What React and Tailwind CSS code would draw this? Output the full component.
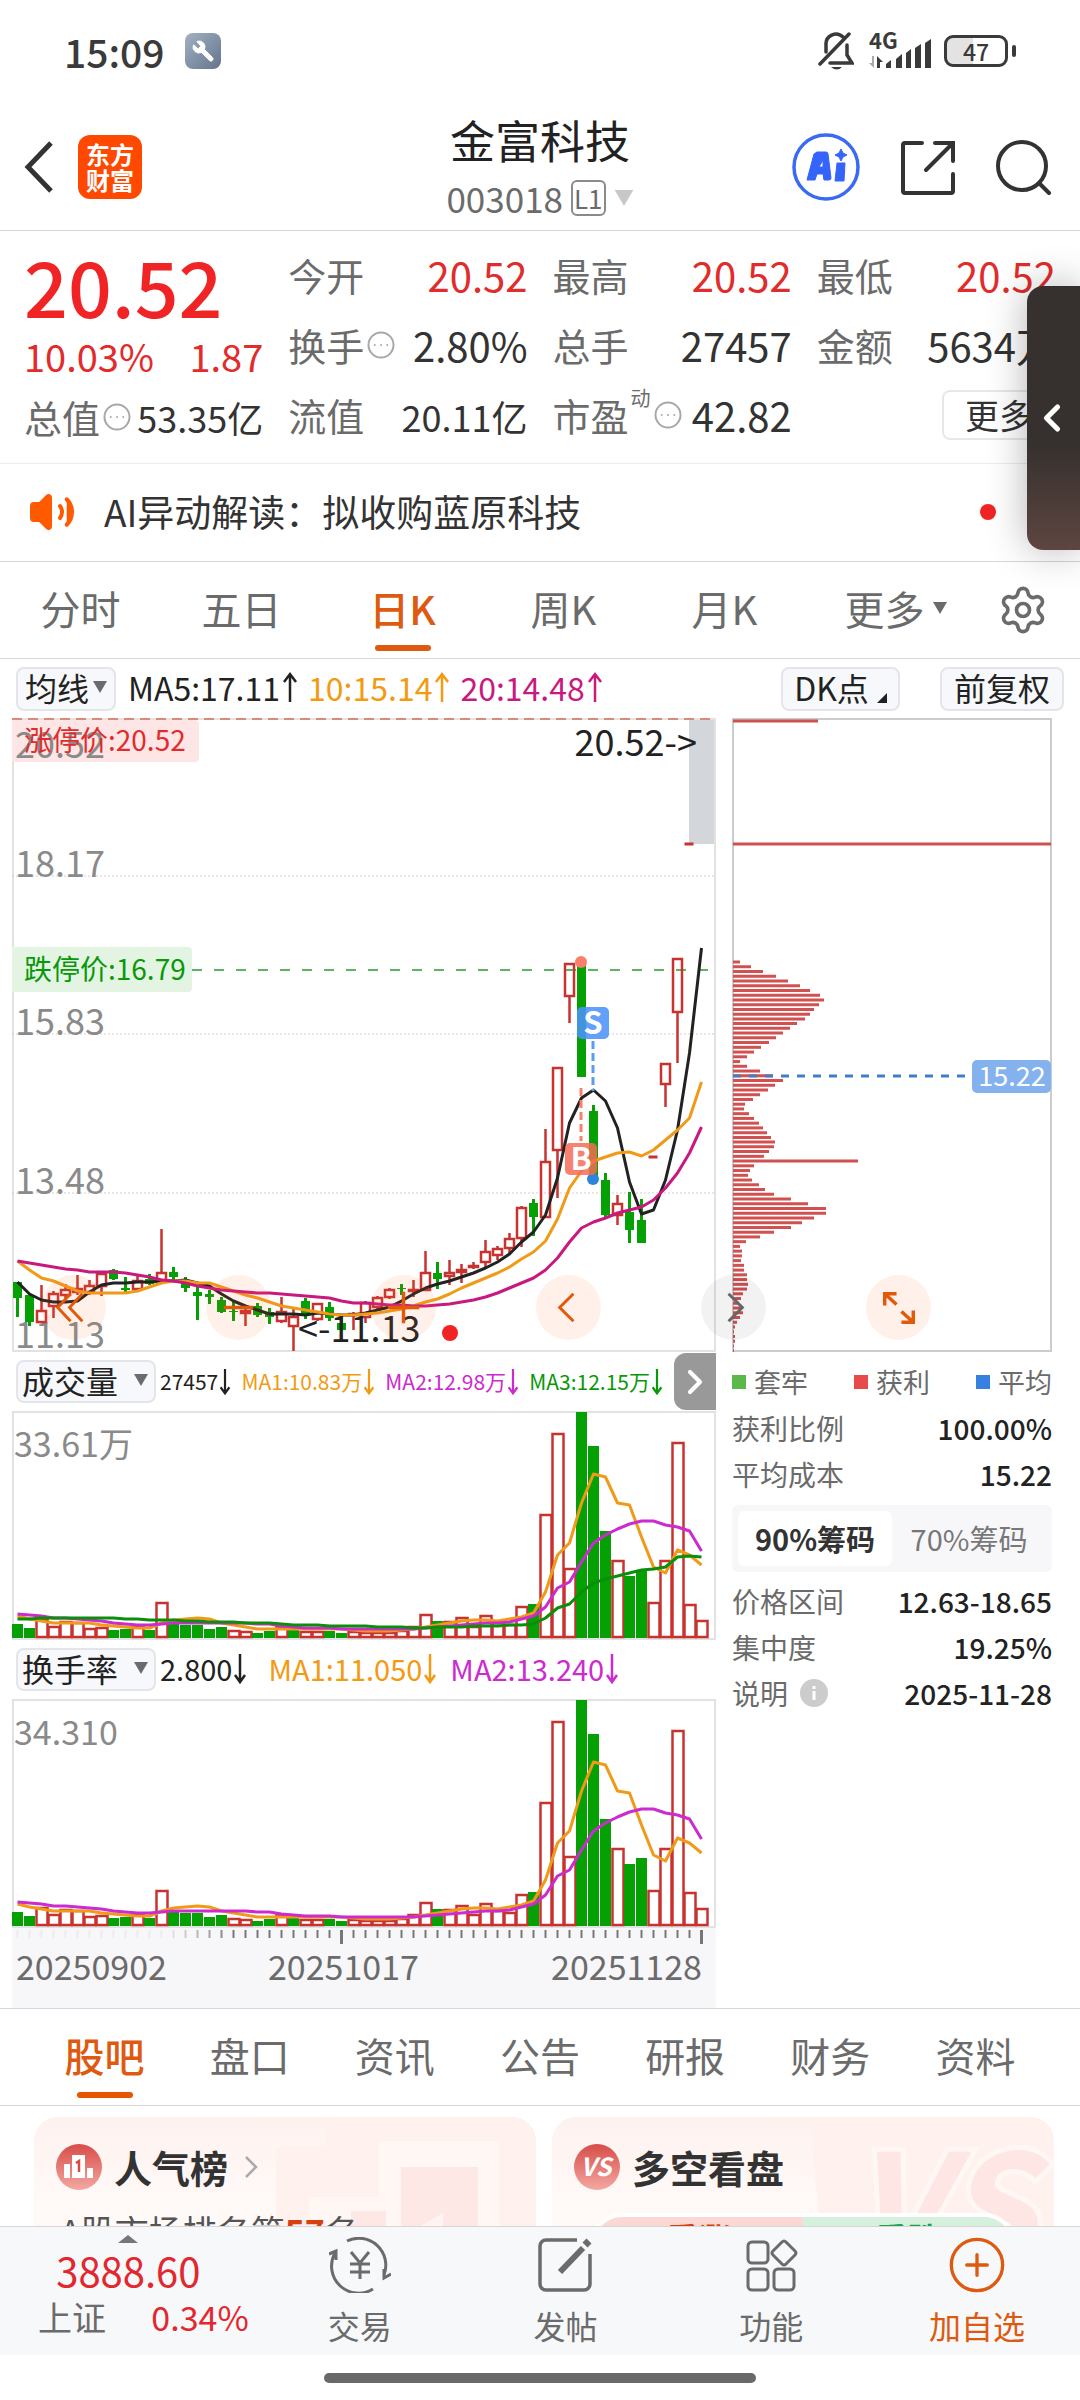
import {
  ChevronLeft,
  ChevronRight,
  CircleEllipsis,
  CirclePlus,
  Settings,
  Volume2,
  Wrench
} from 'lucide-react';

const STEP = 12;
const RED = '#c8322f';
const GREEN = '#04a004';

// [direction, body top, body bottom, wick top, wick bottom]
const CANDLES = [
  ['g', 564, 580, 564, 599], ['g', 577, 604, 577, 608], ['r', 592, 605, 567, 605], ['r', 575, 589, 573, 600],
  ['r', 571, 578, 566, 582], ['r', 570, 575, 557, 577], ['r', 567, 575, 562, 577], ['r', 555, 569, 555, 578],
  ['g', 552, 561, 551, 562], ['g', 570, 572, 559, 574], ['r', 562, 572, 557, 573], ['g', 561, 566, 556, 567],
  ['r', 554, 563, 511, 563], ['g', 554, 559, 549, 564], ['g', 564, 570, 559, 574], ['g', 574, 578, 569, 602],
  ['g', 576, 579, 572, 586], ['g', 582, 594, 579, 595], ['g', 593, 594, 584, 603], ['r', 592, 596, 589, 608],
  ['g', 588, 597, 585, 599], ['g', 594, 599, 590, 606], ['r', 593, 604, 579, 605], ['r', 598, 609, 590, 633],
  ['g', 583, 596, 580, 601], ['r', 585, 602, 585, 603], ['g', 589, 600, 584, 603], ['g', 605, 612, 597, 613],
  ['r', 595, 597, 594, 612], ['r', 584, 600, 583, 605], ['r', 579, 590, 578, 591], ['r', 571, 580, 570, 581],
  ['g', 570, 571, 566, 577], ['r', 571, 573, 562, 579], ['r', 554, 573, 533, 573], ['g', 555, 561, 544, 571],
  ['r', 554, 559, 542, 567], ['r', 551, 555, 546, 565], ['r', 547, 549, 544, 551], ['r', 533, 545, 522, 549],
  ['r', 530, 538, 528, 542], ['r', 520, 531, 515, 537], ['r', 489, 521, 488, 529], ['g', 485, 499, 481, 518],
  ['r', 443, 500, 411, 500], ['r', 349, 433, 349, 480], ['r', 245, 279, 245, 305], ['g', 242, 359, 242, 359],
  ['g', 393, 460, 387, 460], ['g', 462, 497, 455, 499], ['r', 485, 498, 477, 507], ['g', 494, 512, 474, 525],
  ['g', 502, 525, 481, 525], ['r', 439, 439, 439, 439], ['r', 345, 367, 345, 389], ['r', 240, 295, 240, 345],
  ['r', 126, 126, 126, 126]
];

const PRICE_MA5 = [
  564, 576, 582, 584, 584, 583, 574, 567, 565, 565, 564, 564, 563, 563, 562, 565, 568, 576, 583, 588,
  592, 596, 596, 596, 597, 595, 596, 597, 597, 595, 592, 589, 583, 576, 570, 566, 563, 559, 555, 550,
  544, 536, 524, 514, 497, 460, 405, 380, 372, 383, 410, 464, 496, 492, 462, 412, 335, 230
];
const PRICE_MA10 = [
  543, 552, 560, 563, 568, 573, 575, 575, 575, 575, 573, 569, 565, 563, 563, 565, 565, 569, 573, 577,
  580, 584, 588, 590, 592, 594, 596, 597, 597, 596, 595, 593, 591, 588, 584, 581, 576, 570, 565, 560,
  555, 549, 541, 534, 523, 501, 470, 453, 443, 439, 435, 434, 438, 432, 422, 412, 400, 364
];
const PRICE_MA20 = [
  543, 545, 547, 549, 551, 552, 554, 554, 554, 555, 557, 559, 562, 563, 565, 568, 570, 572, 573, 574,
  575, 575, 576, 577, 578, 579, 580, 583, 585, 585, 586, 587, 587, 588, 588, 587, 586, 584, 582, 579,
  575, 570, 565, 560, 552, 540, 524, 510, 504, 500, 495, 492, 489, 482, 470, 455, 435, 409
];

const VOLUME_DIR = 'ggrrrrrrggrgrggggg' + 'rrggrgrrggrrrrrrrgrrrrrrrg' + 'rrrgggrggrrrrr';
const VOLUMES = [
  14, 10, 19, 12, 17, 16, 10, 11, 8, 9, 12, 8, 36, 14, 13, 13, 9, 11, 8, 7,
  5, 7, 12, 8, 7, 7, 7, 5, 7, 6, 6, 6, 8, 12, 24, 17, 17, 21, 12, 23,
  16, 14, 32, 34, 124, 205, 70, 226, 192, 107, 78, 62, 68, 36, 78, 196, 34, 18
];
const VOLUME_MA1 = [
  205, 208, 210, 212, 212, 212, 212, 214, 215, 216, 217, 217, 212, 209, 208, 207, 208, 212, 214, 216,
  218, 218, 218, 218, 218, 218, 218, 218, 219, 220, 220, 220, 219, 218, 216, 214, 212, 210, 209, 209,
  210, 208, 206, 202, 181, 144, 132, 92, 63, 66, 92, 94, 126, 156, 162, 139, 144, 154
];
const VOLUME_MA2 = [
  203, 204, 205, 207, 207, 208, 209, 210, 212, 213, 214, 214, 213, 212, 212, 212, 212, 212, 212, 212,
  213, 213, 215, 216, 217, 217, 217, 218, 218, 218, 218, 218, 218, 218, 217, 216, 215, 214, 213, 212,
  212, 211, 208, 205, 196, 177, 171, 151, 132, 124, 118, 113, 110, 110, 114, 116, 120, 140
];
const VOLUME_MA3 = [
  208, 208, 207, 207, 207, 207, 207, 207, 207, 208, 208, 209, 209, 209, 210, 210, 211, 211, 211, 212,
  212, 212, 213, 214, 214, 214, 215, 215, 215, 215, 216, 216, 216, 217, 217, 216, 216, 216, 215, 215,
  215, 214, 214, 213, 207, 197, 193, 181, 172, 168, 165, 162, 159, 158, 156, 146, 145, 146
];

const CHIPS = [
  7, 18, 30, 43, 55, 67, 77, 87, 91, 86, 81, 77, 72, 64, 57, 50, 43, 36, 28, 21, 14, 7, 14, 27, 40, 50, 42, 35,
  27, 20, 12, 11, 16, 21, 26, 30, 34, 38, 42, 41, 36, 31, 125, 21, 17, 15, 19, 26, 32, 41, 58, 75, 93, 93, 81,
  69, 58, 41, 27, 13, 7, 9, 9, 8, 11, 11, 14, 14, 15, 14, 10, 8, 6, 9, 10, 7, 4, 2, 1, 2, 2, 1, 1
];

const barX = (i) => 5.5 + i * STEP;
const toPoints = (values) => values.map((y, i) => `${barX(i)},${y}`).join(' ');

const Line = ({ values, color }) => (
  <polyline points={toPoints(values)} fill="none" stroke={color} strokeWidth="3" strokeLinejoin="round" />
);

const Triangle = ({ className }) => (
  <svg viewBox="0 0 14 12" className={className} fill="currentColor" aria-hidden="true">
    <path d="M0 0h14L7 12z" />
  </svg>
);

const Arrow = ({ down = false, className = 'h-8 w-4' }) => (
  <svg viewBox="0 0 16 32" className={className} fill="none" stroke="currentColor" strokeWidth="2.5" aria-hidden="true">
    {down ? <path d="M8 1v28M3 22l5 7 5-7" /> : <path d="M8 31V3M2 11l6-8 6 8" />}
  </svg>
);

const StatusBar = () => (
  <div className="flex h-[104px] items-center justify-between pr-16 pb-0.5 pl-16 text-[#3a3a3a]">
    <div className="flex items-center gap-5">
      <span className="text-[39px] leading-none font-medium">15:09</span>
      <span className="flex size-9 items-center justify-center rounded-lg bg-gradient-to-br from-[#a3b1c3] to-[#64758c]">
        <Wrench className="size-6 -scale-x-100 text-white" fill="white" strokeWidth={1} />
      </span>
    </div>
    <div className="flex items-center">
      <svg viewBox="0 0 36 40" className="h-10 w-9" fill="none" stroke="currentColor" strokeWidth="3.5" strokeLinecap="round">
        <path d="M8 21v-7a10 10 0 0 1 17-8M2 33L31 3M12 32h22l-5-8V14" />
        <path d="M13 36h11q-5 5-11 0z" fill="currentColor" stroke="none" />
      </svg>
      <svg viewBox="0 0 64 40" className="ml-3.5 h-10 w-16" fill="currentColor">
        <text x="1" y="18" fontSize="22" fontWeight="700">4G</text>
        <path d="M6 25v12l-5-5h3v-7z" fill="#aaa" />
        <path d="M9 37V25l6 6h-3v6z" />
        <path d="M18 33l5-4v8h-5zM28 28l6-5v14h-6zM38 22l5-4v19h-5zM47 17l6-4v24h-6zM57 12l6-4v29h-6z" />
      </svg>
      <span className="ml-3 flex h-8 w-16 items-center justify-center rounded-[9px] border-3 border-current bg-gradient-to-r from-[#e3e3e3] from-45% to-white to-45% text-[23px] leading-none font-medium">
        47
      </span>
      <span className="ml-1 h-3 w-1 rounded-sm bg-current" />
    </div>
  </div>
);

const Header = () => (
  <header className="grid h-[127px] grid-cols-3 items-center border-b border-[#d6d6d6]">
    <div className="flex items-center gap-6 pl-6">
      <button type="button" aria-label="返回">
        <svg viewBox="0 0 30 52" className="h-[52px] w-[30px]" fill="none" stroke="#333" strokeWidth="5">
          <path d="M27 2L4 26l23 24" />
        </svg>
      </button>
      <span className="flex size-16 flex-col items-center justify-center rounded-xl bg-[#ff4800] text-2xl leading-[26px] font-bold text-white">
        <span>东方</span>
        <span>财富</span>
      </span>
    </div>
    <div className="flex flex-col items-center">
      <h1 className="text-[45px] leading-[58px] text-[#222]">金富科技</h1>
      <div className="flex items-center gap-2 pt-1 text-[35px] leading-[50px] text-[#6b6b6b]">
        003018
        <span className="rounded-md border-2 border-[#8a8a8a] px-px text-[26px] leading-8">L1</span>
        <Triangle className="h-4 w-5 text-[#c8c8c8]" />
      </div>
    </div>
    <div className="flex items-center justify-end gap-10 pr-7 text-[#333]">
      <button type="button" aria-label="Ai">
        <svg viewBox="0 0 68 68" className="size-[68px]">
          <circle cx="34" cy="34" r="32" fill="none" stroke="#3a6af5" strokeWidth="3.5" />
          <path
            d="M25 19h9a2 2 0 0 1 2 2l3 24a2 2 0 0 1-2 2h-5l-1-6h-6l-2 6h-8L22 21zM27 34h4V27z"
            fill="#3564fa"
            fillRule="evenodd"
            stroke="#3564fa"
            strokeWidth="1"
            strokeLinejoin="round"
          />
          <path d="M45 30h8l-1 18h-9zM49 16l2 4 4 2-4 2-2 4-2-4-4-2 4-2z" fill="#3564fa" stroke="#3564fa" strokeWidth="1" strokeLinejoin="round" />
        </svg>
      </button>
      <button type="button" aria-label="分享">
        <svg viewBox="0 0 56 56" className="size-14" fill="none" stroke="currentColor" strokeWidth="4" strokeLinecap="round">
          <path d="M22 4H5a2 2 0 0 0-2 2v46a2 2 0 0 0 2 2h46a2 2 0 0 0 2-2V35M35 4h18v18M53 4L26 31" />
        </svg>
      </button>
      <button type="button" aria-label="搜索">
        <svg viewBox="0 0 56 56" className="size-14" fill="none" stroke="currentColor" strokeWidth="4" strokeLinecap="round">
          <circle cx="26" cy="27" r="24" />
          <path d="M43 44l10 10" />
        </svg>
      </button>
    </div>
  </header>
);

const Quote = ({ label, value, tip = false, sup, red = false }) => (
  <div className="flex h-[70px] items-center whitespace-nowrap">
    <span className="text-[38px] leading-none text-[#6b6b6b]">{label}</span>
    {sup && <sup className="top-0 ml-0.5 self-start pt-2 text-xl leading-none text-[#6b6b6b]">{sup}</sup>}
    {tip && <CircleEllipsis className="ml-0.5 size-[30px] shrink-0 text-[#a8a8a8]" strokeWidth={1.6} />}
    <span className={`ml-auto text-[40px] leading-none ${red ? 'text-[#e22b2b]' : 'text-[#333]'}`}>{value}</span>
  </div>
);

const QuotePanel = () => (
  <section className="grid h-[233px] grid-cols-4 gap-x-[25px] border-b border-[#ececec] px-6 pt-[9px]">
    <div>
      <div className="flex h-[88px] items-center text-[77px] leading-none font-medium text-[#f02424]">20.52</div>
      <div className="flex h-[56px] items-center justify-between text-[38px] leading-none text-[#e22b2b]">
        <span>10.03%</span>
        <span>1.87</span>
      </div>
      <div className="flex h-[66px] items-center whitespace-nowrap">
        <span className="text-[38px] leading-none text-[#6b6b6b]">总值</span>
        <CircleEllipsis className="ml-0.5 size-[30px] text-[#a8a8a8]" strokeWidth={1.6} />
        <span className="ml-auto text-[36px] leading-none text-[#333]">53.35亿</span>
      </div>
    </div>
    <div>
      <Quote label="今开" value="20.52" red />
      <Quote label="换手" value="2.80%" tip />
      <Quote label="流值" value={<span className="text-[36px]">20.11亿</span>} />
    </div>
    <div>
      <Quote label="最高" value="20.52" red />
      <Quote label="总手" value="27457" />
      <Quote label="市盈" sup="动" value="42.82" tip />
    </div>
    <div>
      <Quote label="最低" value="20.52" red />
      <Quote label="金额" value="5634万" />
      <div className="flex h-[70px] items-center justify-end">
        <button type="button" className="h-[50px] w-[114px] rounded-lg border-2 border-[#e6e7ea] text-[34px] leading-none text-[#333]">
          更多
        </button>
      </div>
    </div>
  </section>
);

const NewsRow = () => (
  <a href="#news" className="flex h-[98px] items-center border-b border-[#d6d6d6] pr-7 pb-0.5 pl-7 text-[#333]">
    <Volume2 className="size-12 text-[#ff5a00]" fill="#ff5a00" strokeWidth={2} />
    <span className="ml-7 text-[37px] leading-none">AI异动解读：拟收购蓝原科技</span>
    <span className="ml-auto size-4 rounded-full bg-[#f02424]" />
    <ChevronRight className="ml-5 size-9 text-[#bbb]" />
  </a>
);

const PERIODS = ['分时', '五日', '日K', '周K', '月K'];

const PeriodTabs = () => (
  <nav className="grid h-[97px] grid-cols-[repeat(6,161fr)_114fr] border-b border-[#d6d6d6] text-[40px] leading-none text-[#6b6b6b]">
    {PERIODS.map((period) => {
      const active = period === '日K';
      return (
        <button
          key={period}
          type="button"
          className={`flex flex-col items-center justify-between pt-6.5 pb-[7px] ${active ? 'font-medium text-[#dd5a10]' : ''}`}
        >
          {period}
          <span className={`h-[6px] w-14 rounded-full ${active ? 'bg-[#dd5a10]' : ''}`} />
        </button>
      );
    })}
    <button type="button" className="flex items-center justify-center gap-2 pb-1 pl-5">
      更多
      <Triangle className="h-3 w-3.5" />
    </button>
    <button type="button" aria-label="设置" className="flex items-center justify-center">
      <Settings className="size-[52px]" strokeWidth={1.7} />
    </button>
  </nav>
);

const Toolbar = () => (
  <div className="flex h-[59px] items-center pr-4 pl-4 text-[32px] leading-none text-[#222]">
    <button type="button" className="flex h-11 w-[100px] items-center justify-center gap-1 rounded-lg border-2 border-[#e4e5ea] bg-[#f7f8fb] pb-1">
      均线
      <Triangle className="h-3 w-3.5 text-[#6b6b6b]" />
    </button>
    <div className="ml-3 flex items-center gap-2 pb-1">
      <span className="flex items-center">MA5:17.11<Arrow className="h-8 w-5" /></span>
      <span className="flex items-center text-[#f39a13]">10:15.14<Arrow className="h-8 w-5" /></span>
      <span className="flex items-center text-[#c8197f]">20:14.48<Arrow className="h-8 w-5" /></span>
    </div>
    <button type="button" className="ml-auto flex h-11 w-[119px] items-end justify-center gap-2 rounded-lg border-2 border-[#e4e5ea] bg-[#f7f8fb] pb-1.5">
      DK点
      <svg viewBox="0 0 10 10" className="size-2.5" fill="#222">
        <path d="M10 0v10H0z" />
      </svg>
    </button>
    <button type="button" className="ml-10 h-11 w-[124px] rounded-lg border-2 border-[#e4e5ea] bg-[#f7f8fb] pb-1">
      前复权
    </button>
  </div>
);

const Candle = ({ index, data }) => {
  const [dir, top, bottom, high, low] = data;
  const x = barX(index);
  if (high === low) {
    return <path d={`M${x - 5} ${top}h9`} stroke={RED} strokeWidth="3" />;
  }
  if (dir === 'g') {
    return (
      <g fill={GREEN}>
        <rect x={x - 1.5} y={high} width="3" height={low - high} />
        <rect x={x - 4.5} y={top} width="9" height={bottom - top} />
      </g>
    );
  }
  return (
    <g fill="none" stroke={RED} strokeWidth="2.5">
      <path d={`M${x} ${high}V${top}M${x} ${bottom}V${low}`} />
      <rect x={x - 4.5} y={top + 1} width="9" height={Math.max(bottom - top - 2, 1)} />
    </g>
  );
};

const PriceChart = () => (
  <svg viewBox="0 0 704 634" className="block w-full" fontSize="36">
    <rect x="1" y="1" width="702" height="632" fill="none" stroke="#e2e2e2" strokeWidth="2" />
    <path d="M0 1h704" stroke="#d98a7a" strokeWidth="2" strokeDasharray="10 6" />
    {[158, 316, 475].map((y) => (
      <path key={y} d={`M0 ${y}h704`} stroke="#cfcfcf" strokeWidth="1" strokeDasharray="2 2" />
    ))}
    <rect x="677" y="2" width="25" height="124" fill="#d3d6db" />
    <path d="M180 252h524" stroke="#5fb35f" strokeWidth="2" strokeDasharray="10 12" />

    <path d="M0 2h183a4 4 0 0 1 4 4v34a4 4 0 0 1-4 4H0z" fill="#fee6e6" />
    <path d="M0 229h176a4 4 0 0 1 4 4v37a4 4 0 0 1-4 4H0z" fill="#e3f4e3" />
    <g fill="#8a8a8a">
      <text x="3" y="40">20.52</text>
      <text x="3" y="159">18.17</text>
      <text x="3" y="317">15.83</text>
      <text x="3" y="476">13.48</text>
      <text x="3" y="630">11.13</text>
    </g>
    <g fontSize="28">
      <text x="12" y="33" fill="#e22b2b">涨停价:20.52</text>
      <text x="12" y="262" fill="#089808">跌停价:16.79</text>
    </g>

    {CANDLES.map((data, i) => (
      <Candle key={i} index={i} data={data} />
    ))}
    <Line values={PRICE_MA5} color="#222" />
    <Line values={PRICE_MA10} color="#f09a18" />
    <Line values={PRICE_MA20} color="#c8197f" />

    <g strokeWidth="3" strokeDasharray="8 4">
      <path d="M581 323v50" stroke="#5b9cf0" />
      <path d="M569 370v53" stroke="#f77f6c" />
    </g>
    <circle cx="569" cy="244" r="6" fill="#f77f6c" />
    <circle cx="581" cy="461" r="6" fill="#2b86d9" />
    <g fontSize="31" fontWeight="700" textAnchor="middle">
      <rect x="565" y="289" width="32" height="32" rx="5" fill="#4b93fa" fillOpacity=".88" />
      <text x="581" y="316" fill="#fff">S</text>
      <rect x="553" y="425" width="32" height="32" rx="5" fill="#f76b57" fillOpacity=".85" />
      <text x="569" y="452" fill="#fff">B</text>
    </g>

    <text x="685" y="38" fill="#222" textAnchor="end">20.52-&gt;</text>
    <text x="286" y="624" fill="#222">&lt;-11.13</text>
    <circle cx="438" cy="615" r="8" fill="#f02424" />
  </svg>
);

const BarChart = ({ label, showThird = false }) => (
  <svg viewBox="0 0 704 229" className="block w-full" fontSize="34">
    <rect x="1" y="1" width="702" height="227" fill="none" stroke="#e2e2e2" strokeWidth="2" />
    <text x="2" y="46" fill="#8a8a8a">{label}</text>
    {VOLUMES.map((height, i) =>
      VOLUME_DIR[i] === 'g' ? (
        <rect key={i} x={barX(i) - 5.5} y={227 - height} width="11" height={height} fill={GREEN} />
      ) : (
        <rect key={i} x={barX(i) - 5} y={228 - height} width="11" height={height - 2} fill="#fff" stroke={RED} strokeWidth="2.5" />
      )
    )}
    <Line values={VOLUME_MA1} color="#f09a18" />
    <Line values={VOLUME_MA2} color="#cc2bd0" />
    {showThird && <Line values={VOLUME_MA3} color="#0b8f0b" />}
  </svg>
);

const IndicatorButton = ({ children }) => (
  <button type="button" className="ml-1 flex h-[43px] w-[140px] shrink-0 items-center justify-between rounded-lg border-2 border-[#e4e5ea] bg-[#f7f8fb] pr-1.5 pb-1 pl-1 text-[32px] leading-none text-[#222]">
    {children}
    <Triangle className="h-3 w-3.5 text-[#6b6b6b]" />
  </button>
);

const DateAxis = () => (
  <div className="h-20 bg-[#f7f7fa]">
    <svg viewBox="0 0 704 18" className="block w-full" stroke="#777">
      {VOLUMES.map((_, i) => {
        const major = i === 27 || i === 57;
        return (
          <path
            key={i}
            d={`M${barX(i)} 2v${major ? 14 : 8}`}
            strokeWidth={major ? 3 : 2}
            opacity={Math.min(Math.max((i - 12) / 6, 0.08), 1)}
          />
        );
      })}
    </svg>
    <div className="grid grid-cols-[246fr_180fr_278fr] pr-3.5 pl-1 text-[34px] leading-10 text-[#6b6b6b]">
      <span>20250902</span>
      <span className="text-center">20251017</span>
      <span className="text-right">20251128</span>
    </div>
  </div>
);

const ChipChart = () => (
  <svg viewBox="0 0 320 634" className="block w-full">
    <rect x="1" y="1" width="318" height="632" fill="none" stroke="#ccc" strokeWidth="2" />
    <g stroke="#d15050" strokeWidth="3">
      <path d="M1 3h85M1 126h318" />
      {CHIPS.map((width, i) => (
        <path key={i} d={`M1 ${244 + i * 4.74}h${width}`} />
      ))}
    </g>
    <path d="M1 358h234" stroke="#3f7fc8" strokeWidth="3" strokeDasharray="8 8" />
    <rect x="240" y="342" width="79" height="33" rx="5" fill="#84b2ee" />
    <text x="280" y="368" fontSize="27" fill="#fff" textAnchor="middle">15.22</text>
  </svg>
);

const ChipRow = ({ label, value, tip = false }) => (
  <div className="flex h-[46px] items-center justify-between text-[28px] leading-none">
    <dt className="flex items-center gap-3 text-[#6b6b6b]">
      {label}
      {tip && (
        <svg viewBox="0 0 28 28" className="size-7" aria-hidden="true">
          <circle cx="14" cy="14" r="14" fill="#ccc" />
          <path d="M14 12v9M14 7v3" stroke="#fff" strokeWidth="3" />
        </svg>
      )}
    </dt>
    <dd className="font-medium text-[#222]">{value}</dd>
  </div>
);

const ChipPanel = () => (
  <aside className="min-w-0">
    <ChipChart />
    <ul className="flex h-[53px] items-center justify-between pt-1.5 text-[27px] leading-none text-[#6b6b6b]">
      <li className="flex items-center gap-2"><span className="size-3.5 bg-[#5cb848]" />套牢</li>
      <li className="flex items-center gap-2"><span className="size-3.5 bg-[#e84a4a]" />获利</li>
      <li className="flex items-center gap-2"><span className="size-3.5 bg-[#3680e0]" />平均</li>
    </ul>
    <dl>
      <ChipRow label="获利比例" value="100.00%" />
      <ChipRow label="平均成本" value="15.22" />
    </dl>
    <div className="mt-2 mb-1.5 grid h-[67px] grid-cols-2 rounded-md bg-[#f7f7fa] p-[6px] text-[29px] leading-none">
      <button type="button" className="rounded-md bg-white font-bold text-[#333]">90%筹码</button>
      <button type="button" className="text-[#777]">70%筹码</button>
    </div>
    <dl>
      <ChipRow label="价格区间" value="12.63-18.65" />
      <ChipRow label="集中度" value="19.25%" />
      <ChipRow label="说明" value="2025-11-28" tip />
    </dl>
  </aside>
);

const FLOAT_BUTTONS = [
  { label: '最左', d: 'M30 19L17 33l13 14M42 19L29 33l13 14' },
  { label: '缩小', d: 'M18 33h30', bold: true },
  { label: '放大', d: 'M17 33h32M33 17v32', bold: true },
  { label: '左移', d: 'M38 19L24 33l14 14' },
  { label: '右移', d: 'M28 19l14 14-14 14', gray: true },
  { label: '全屏', d: 'M19 31V19h12M19 19l12 11M36 48h12V36M48 48L36 37', bold: true }
];

const FloatButtons = () => (
  <div className="absolute top-[557px] left-[41px] flex gap-[100px]">
    {FLOAT_BUTTONS.map(({ label, d, gray, bold }) => (
      <button
        key={label}
        type="button"
        aria-label={label}
        className={`size-[65px] rounded-full ${gray ? 'bg-black/5 text-[#666]' : 'bg-[#ff6a20]/10 text-[#e2590b]'}`}
      >
        <svg viewBox="0 0 66 66" fill="none" stroke="currentColor" strokeWidth={bold ? 3.5 : 3}>
          <path d={d} />
        </svg>
      </button>
    ))}
  </div>
);

const ChartArea = () => (
  <section className="relative grid grid-cols-[704fr_320fr] gap-4 border-b border-[#d6d6d6] pr-7 pl-3">
    <div className="min-w-0">
      <PriceChart />
      <div className="flex h-[59px] items-center text-[21px] leading-none whitespace-nowrap">
        <IndicatorButton>成交量</IndicatorButton>
        <div className="flex min-w-0 flex-1 items-center justify-between pr-2.5 pl-1">
          <span className="flex items-center text-[#222]">27457<Arrow down className="h-8 w-3.5" /></span>
          <span className="flex items-center text-[#f39a13]">MA1:10.83万<Arrow down className="h-8 w-3.5" /></span>
          <span className="flex items-center text-[#cc2bd0]">MA2:12.98万<Arrow down className="h-8 w-3.5" /></span>
          <span className="flex items-center text-[#089808]">MA3:12.15万<Arrow down className="h-8 w-3.5" /></span>
        </div>
        <button type="button" aria-label="更多指标" className="flex h-[57px] w-[42px] shrink-0 items-center justify-center rounded-l-xl bg-[#999] text-white">
          <ChevronRight className="size-10" strokeWidth={2.5} />
        </button>
      </div>
      <BarChart label="33.61万" showThird />
      <div className="flex h-[59px] items-center text-[29px] leading-none whitespace-nowrap">
        <IndicatorButton>换手率</IndicatorButton>
        <span className="ml-1 flex items-center pb-0.5 text-[#222]">2.800<Arrow down /></span>
        <span className="ml-5 flex items-center pb-0.5 text-[#f39a13]">MA1:11.050<Arrow down /></span>
        <span className="ml-3 flex items-center pb-0.5 text-[#cc2bd0]">MA2:13.240<Arrow down /></span>
      </div>
      <BarChart label="34.310" />
      <DateAxis />
    </div>
    <ChipPanel />
    <FloatButtons />
  </section>
);

const SECTIONS = ['股吧', '盘口', '资讯', '公告', '研报', '财务', '资料'];

const SectionTabs = () => (
  <nav className="grid h-[97px] grid-cols-7 border-b border-[#d6d6d6] px-8 text-[40px] leading-none text-[#6b6b6b]">
    {SECTIONS.map((name, i) => (
      <button
        key={name}
        type="button"
        className={`flex flex-col items-center justify-between pt-6.5 pb-[7px] ${i === 0 ? 'font-medium text-[#dd5a10]' : ''}`}
      >
        {name}
        <span className={`h-[6px] w-14 rounded-full ${i === 0 ? 'bg-[#e85500]' : ''}`} />
      </button>
    ))}
  </nav>
);

const BadgeGradient = ({ id }) => (
  <linearGradient id={id} x1="0" y1="0" x2="0" y2="1">
    <stop offset="0" stopColor="#d84c48" />
    <stop offset="1" stopColor="#f3a8a2" />
  </linearGradient>
);

const Cards = () => (
  <section className="grid grid-cols-2 gap-4 px-[34px] pt-[11px] pr-[26px]">
    <article className="relative h-60 overflow-hidden rounded-3xl bg-gradient-to-b from-[#fef2ef] to-[#fffaf8] to-40% px-[22px] pt-6">
      <svg viewBox="0 0 260 240" className="absolute top-0 right-0 h-60">
        <path d="M50 0h210v240H0V30h50z" fill="#fef1ee" />
        <path d="M103 24h120v216H33V80h70z" fill="#fff7f4" />
        <path d="M125 50h77v190h-77zM75 94h35v146H75z" fill="#fde8e5" />
        <path d="M143 110l24-14v60h-14v-40h-10z" fill="#fff4f1" />
      </svg>
      <h2 className="relative flex h-[52px] items-center text-[38px] leading-none font-bold text-[#333]">
        <svg viewBox="0 0 46 46" className="mr-3 size-[46px]">
          <BadgeGradient id="rank" />
          <circle cx="23" cy="23" r="23" fill="url(#rank)" />
          <path d="M8 20h6v14H8zM16 11h13v23H16zM31 24h6v10h-6z" fill="#fff" />
          <path d="M20 19l3-2v11" fill="none" stroke="#d84c48" strokeWidth="2.5" />
        </svg>
        人气榜
        <svg viewBox="0 0 14 24" className="ml-4 h-6 w-3.5" fill="none" stroke="#aaa" strokeWidth="2.5">
          <path d="M2 2l10 10L2 22" />
        </svg>
      </h2>
      <p className="relative mt-5 pl-1 text-[34px] leading-[36px] text-[#555]">
        A股市场排名第<b className="text-[#d84010]">57</b>名
      </p>
    </article>
    <article className="relative h-60 overflow-hidden rounded-3xl bg-gradient-to-b from-[#fef2ef] to-[#fffaf8] to-40% px-[22px] pt-6">
      <svg viewBox="0 0 250 240" className="absolute top-0 right-0 h-60">
        <path d="M5 0h245v240H30z" fill="#fef1ee" />
        <text x="46" y="146" fontSize="150" fontWeight="700" fontStyle="italic" fill="#fde6e3" stroke="#fff7f4" strokeWidth="10" paintOrder="stroke">VS</text>
      </svg>
      <h2 className="relative flex h-[52px] items-center text-[38px] leading-none font-bold text-[#333]">
        <svg viewBox="0 0 46 46" className="mr-3 size-[46px]">
          <BadgeGradient id="versus" />
          <circle cx="23" cy="23" r="23" fill="url(#versus)" />
          <text x="22" y="32" fontSize="25" fontWeight="700" fontStyle="italic" fill="#fff" textAnchor="middle">VS</text>
        </svg>
        多空看盘
      </h2>
      <div className="relative mx-4 mt-5 grid h-16 grid-cols-2 overflow-hidden rounded-full border-4 border-white text-[32px] leading-10 font-bold">
        <button type="button" className="flex justify-center bg-[#fbd8d3] text-[#d84010]">看涨</button>
        <button type="button" className="flex justify-center bg-[#d5f0dd] text-[#20a050]">看跌</button>
      </div>
    </article>
  </section>
);

const NavItem = ({ label, children, accent = false }) => (
  <button
    type="button"
    className={`flex flex-col items-center gap-4 pt-2.5 text-[32px] leading-none ${accent ? 'text-[#dd5a10]' : 'text-[#6b6b6b]'}`}
  >
    {children}
    {label}
  </button>
);

const BottomNav = () => (
  <footer className="relative bg-white">
    <div className="grid h-[129px] grid-cols-[257fr_206fr_206fr_206fr_206fr] border-t border-[#d6d6d6] bg-[#f7f8fa]">
      <a href="#index" className="flex flex-col items-center text-[#e3272e]">
        <svg viewBox="0 0 20 8" className="mt-2 h-2 w-5" fill="#777">
          <path d="M10 0l10 8H0z" />
        </svg>
        <span className="text-[40px] leading-[54px]">3888.60</span>
        <span className="flex w-full justify-between pr-2 pl-[38px] text-[34px] leading-10">
          <span className="text-[#6b6b6b]">上证</span>
          <span>0.34%</span>
        </span>
      </a>
      <NavItem label="交易">
        <svg viewBox="0 0 62 56" className="h-14 w-[62px]" fill="none" stroke="currentColor" strokeWidth="3">
          <path d="M18 4a27 27 0 0 1 37 34M44 52A27 27 0 0 1 6 16M0 17l7-3v9M62 37l-7 4v-9" />
          <path d="M22 15l9 11 9-11M21 27h20M21 35h20M31 26v16" />
        </svg>
      </NavItem>
      <NavItem label="发帖">
        <svg viewBox="0 0 56 56" className="size-14" fill="none" stroke="currentColor" strokeWidth="3.5">
          <path d="M40 3H9a6 6 0 0 0-6 6v38a6 6 0 0 0 6 6h38a6 6 0 0 0 6-6V17" />
          <path d="M23 35l23-24" strokeWidth="6" />
          <path d="M48 8l4-4" strokeWidth="7" />
        </svg>
      </NavItem>
      <NavItem label="功能">
        <svg viewBox="0 0 56 56" className="size-14" fill="none" stroke="currentColor" strokeWidth="3">
          <rect x="5" y="5" width="20" height="21" rx="4" />
          <rect x="5" y="32" width="20" height="21" rx="4" />
          <rect x="31" y="32" width="20" height="21" rx="4" />
          <path d="M39 5q2-2 4 0l9 9q2 2 0 4l-9 9q-2 2-4 0l-9-9q-2-2 0-4z" />
        </svg>
      </NavItem>
      <NavItem label="加自选" accent>
        <CirclePlus className="size-14 scale-110" strokeWidth={1.3} />
      </NavItem>
    </div>
    <div className="flex h-[45px] justify-center pt-[18px]">
      <span className="h-2.5 w-2/5 rounded-full bg-[#696969]" />
    </div>
  </footer>
);

const SideHandle = () => (
  <button
    type="button"
    aria-label="展开侧栏"
    className="absolute top-[286px] right-0 flex h-[264px] w-[53px] items-center justify-center rounded-l-2xl bg-gradient-to-b from-[#36312e] from-60% to-[#5e4541] pr-1 text-white shadow-[0_0_40px_rgba(0,0,0,0.3)]"
  >
    <ChevronLeft className="size-11" strokeWidth={2.8} />
  </button>
);

const App = () => (
  <div className="relative flex h-screen flex-col overflow-hidden bg-white font-['Noto_Sans_CJK_SC',sans-serif]">
    <main className="min-h-0 flex-1 overflow-hidden">
      <StatusBar />
      <Header />
      <QuotePanel />
      <NewsRow />
      <PeriodTabs />
      <Toolbar />
      <ChartArea />
      <SectionTabs />
      <Cards />
    </main>
    <BottomNav />
    <SideHandle />
  </div>
);

export default App;
